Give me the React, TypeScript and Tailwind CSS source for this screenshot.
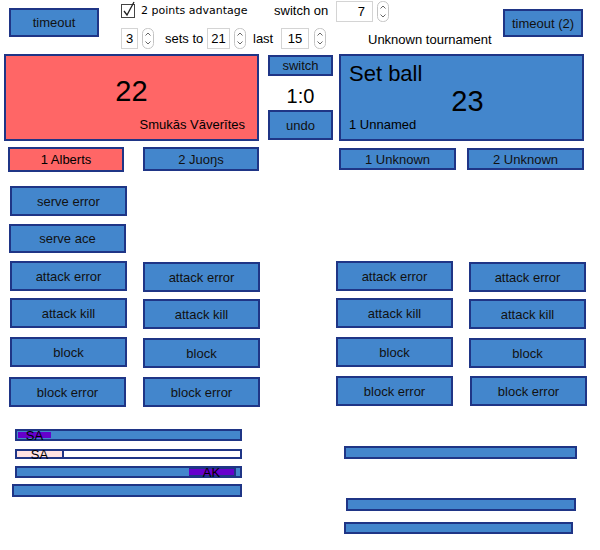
import type { ReactNode } from 'react';

const NAVY = 'border-[#1f3586]';

function Btn({ children, className = '' }: { children: ReactNode; className?: string }) {
  return (
    <div
      className={`flex shrink-0 items-center justify-center border-2 ${NAVY} bg-[#4386cc] text-[13px] leading-none text-[#111] ${className}`}
    >
      {children}
    </div>
  );
}

function Stepper({ className = '' }: { className?: string }) {
  return (
    <svg width="12" height="21" viewBox="0 0 12 21" className={`shrink-0 ${className}`}>
      <rect x="0.5" y="0.5" width="11" height="20" rx="5" fill="#fff" stroke="#c4c4c4" />
      <path d="M3.5 7.5 L6 5 L8.5 7.5" fill="none" stroke="#666" strokeWidth="1" />
      <path d="M3.5 13.5 L6 16 L8.5 13.5" fill="none" stroke="#666" strokeWidth="1" />
    </svg>
  );
}

function NumBox({ value, className = '' }: { value: string; className?: string }) {
  return (
    <div
      className={`flex h-[21px] shrink-0 items-center border border-[#d4d4d4] bg-white text-[13px] leading-none ${className}`}
    >
      {value}
    </div>
  );
}

function Bar({ children, className = '' }: { children?: ReactNode; className?: string }) {
  return (
    <div className={`flex shrink-0 border-2 ${NAVY} bg-[#4386cc] ${className}`}>{children}</div>
  );
}

function Segment({ label, className = '' }: { label: string; className?: string }) {
  return (
    <div
      className={`flex h-full shrink-0 items-center justify-center overflow-visible text-[13px] leading-none text-black ${className}`}
    >
      {label}
    </div>
  );
}

export default function App() {
  return (
    <div className="h-[550px] w-[600px] overflow-hidden bg-white font-['Liberation_Sans',Arial,sans-serif] text-[13px] text-black">
      {/* header */}
      <div className="flex h-[54px] items-start">
        <Btn className="ml-[9px] mt-[8px] h-[29px] w-[90px]">timeout</Btn>

        <div className="ml-[22px] flex flex-col">
          <div className="flex h-[22px] items-center">
            <div className="flex w-[153px] items-center">
              <svg width="16" height="18" viewBox="0 0 16 18" className="-mt-[2px] shrink-0">
                <rect x="0.5" y="3.5" width="13" height="13" fill="#fff" stroke="#444" />
                <path d="M3 10 L6 14 L13 1" fill="none" stroke="#222" strokeWidth="1.3" />
              </svg>
              <span className="ml-[4px] font-['DejaVu_Sans',sans-serif] text-[11px]">
                2 points advantage
              </span>
            </div>
            <span className="w-[62px]">switch on</span>
            <NumBox value="7" className="w-[37px] justify-end pr-[7px]" />
            <Stepper className="ml-[4px]" />
          </div>
          <div className="mt-[6px] flex h-[21px] items-center">
            <NumBox value="3" className="w-[17px] justify-center" />
            <Stepper className="ml-[4px]" />
            <span className="ml-[11px] w-[42px]">sets to</span>
            <NumBox value="21" className="w-[23px] justify-center" />
            <Stepper className="ml-[4px]" />
            <span className="ml-[7px] w-[28px]">last</span>
            <NumBox value="15" className="w-[28px] justify-center" />
            <Stepper className="ml-[5px]" />
            <span className="ml-[42px] mt-[3px]">Unknown tournament</span>
          </div>
        </div>

        <Btn className="ml-auto mr-[17px] mt-[9px] h-[28px] w-[80px]">timeout (2)</Btn>
      </div>

      {/* score row */}
      <div className="flex h-[87px] items-start">
        <div className={`ml-[4px] flex h-[87px] w-[255px] shrink-0 flex-col border-2 ${NAVY} bg-[#ff6666] px-[12px]`}>
          <div className="mt-[21px] text-center text-[29px] leading-none">22</div>
          <div className="mt-auto mb-[8px] text-right text-[13px] leading-none">Smukās Vāverītes</div>
        </div>

        <div className="ml-[9px] flex w-[65px] shrink-0 flex-col">
          <Btn className="mt-[1px] h-[21px] w-[65px]">switch</Btn>
          <div className="flex h-[34px] items-center justify-center pt-[5px] text-[20px] leading-none">1:0</div>
          <Btn className="h-[30px] w-[65px]">undo</Btn>
        </div>

        <div className={`ml-[6px] flex h-[87px] w-[245px] shrink-0 flex-col border-2 ${NAVY} bg-[#4386cc] px-[8px]`}>
          <div className="mt-[7px] text-[22px] leading-none">Set ball</div>
          <div className="ml-[12px] mt-[2px] text-center text-[29px] leading-none">23</div>
          <div className="mt-auto mb-[8px] text-[13px] leading-none">1 Unnamed</div>
        </div>
      </div>

      {/* players */}
      <div className="mt-[6px] flex h-[39px] items-start">
        <div className={`ml-[8px] flex h-[25px] w-[116px] shrink-0 items-center justify-center border-2 ${NAVY} bg-[#ff6666] leading-none`}>
          1 Alberts
        </div>
        <Btn className="ml-[19px] h-[24px] w-[116px]">2 Juoŋs</Btn>
        <Btn className="ml-[80px] mt-[1px] h-[22px] w-[117px]">1 Unknown</Btn>
        <Btn className="ml-[11px] mt-[1px] h-[22px] w-[117px]">2 Unknown</Btn>
      </div>

      {/* actions */}
      <div className="flex h-[38px] items-start">
        <Btn className="ml-[10px] h-[30px] w-[117px]">serve error</Btn>
      </div>
      <div className="flex h-[37px] items-start">
        <Btn className="ml-[9px] h-[29px] w-[117px]">serve ace</Btn>
      </div>
      <div className="flex h-[37px] items-start">
        <Btn className="ml-[10px] h-[30px] w-[117px]">attack error</Btn>
        <Btn className="ml-[16px] mt-[1px] h-[30px] w-[117px]">attack error</Btn>
        <Btn className="ml-[76px] h-[30px] w-[117px]">attack error</Btn>
        <Btn className="ml-[16px] mt-[1px] h-[30px] w-[117px]">attack error</Btn>
      </div>
      <div className="flex h-[39px] items-start">
        <Btn className="ml-[10px] h-[30px] w-[117px]">attack kill</Btn>
        <Btn className="ml-[16px] mt-[1px] h-[30px] w-[117px]">attack kill</Btn>
        <Btn className="ml-[76px] h-[30px] w-[117px]">attack kill</Btn>
        <Btn className="ml-[16px] mt-[1px] h-[30px] w-[117px]">attack kill</Btn>
      </div>
      <div className="flex h-[39px] items-start">
        <Btn className="ml-[10px] h-[30px] w-[117px]">block</Btn>
        <Btn className="ml-[16px] mt-[1px] h-[30px] w-[117px]">block</Btn>
        <Btn className="ml-[76px] h-[30px] w-[117px]">block</Btn>
        <Btn className="ml-[16px] mt-[1px] h-[30px] w-[117px]">block</Btn>
      </div>
      <div className="flex h-[31px] items-start">
        <Btn className="ml-[9px] mt-[1px] h-[30px] w-[117px]">block error</Btn>
        <Btn className="ml-[17px] mt-[1px] h-[30px] w-[117px]">block error</Btn>
        <Btn className="ml-[76px] h-[30px] w-[117px]">block error</Btn>
        <Btn className="ml-[17px] h-[30px] w-[117px]">block error</Btn>
      </div>

      {/* rally bars */}
      <div className="flex items-start">
        <div className="flex w-[242px] shrink-0 flex-col">
          <Bar className="ml-[15px] mt-[22px] h-[12px] w-[227px] p-[1px]">
            <Segment label="SA" className="w-[33px] bg-[#6600cc]" />
          </Bar>
          <Bar className="ml-[15px] mt-[8px] h-[10px] w-[227px] bg-white">
            <Segment label="SA" className={`w-[47px] border-r-2 ${NAVY} bg-[#ffe2e2]`} />
          </Bar>
          <Bar className="ml-[15px] mt-[7px] h-[12px] w-[227px]">
            <div className="w-[172px] shrink-0" />
            <Segment label="AK" className={`w-[47px] border-y border-r-2 ${NAVY} bg-[#6600cc]`} />
          </Bar>
          <Bar className="ml-[12px] mt-[6px] h-[13px] w-[230px]" />
        </div>
        <div className="ml-[102px] flex flex-col">
          <Bar className="mt-[39px] h-[13px] w-[233px]" />
          <Bar className="ml-[2px] mt-[39px] h-[13px] w-[230px]" />
          <Bar className="mt-[11px] h-[12px] w-[229px]" />
        </div>
      </div>
    </div>
  );
}
